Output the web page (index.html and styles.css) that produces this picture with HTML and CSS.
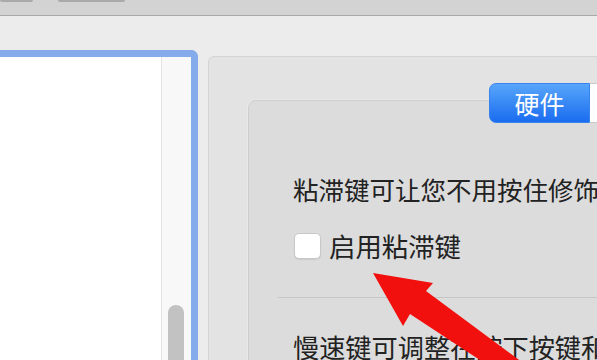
FILE: index.html
```html
<!DOCTYPE html>
<html lang="zh">
<head>
<meta charset="utf-8">
<link rel="stylesheet" href="styles.css">
</head>
<body>
<div class="titlebar">
  <span class="tabedge tab-a"></span>
  <span class="tabedge tab-b"></span>
</div>
<div class="main">
  <div class="list">
    <div class="list-body"></div>
    <div class="scrolltrack"><div class="thumb"></div></div>
  </div>
  <div class="panel">
    <div class="segmented">
      <div class="seg seg-active">硬件</div>
      <div class="seg seg-next"></div>
    </div>
    <div class="box">
      <p class="line line1">粘滞键可让您不用按住修饰键就能进行组合键操作</p>
      <label class="check-row"><span class="checkbox"></span><span class="check-label">启用粘滞键</span></label>
      <div class="sep"></div>
      <p class="line line3">慢速键可调整在按下按键和系统接受按键之间的时间</p>
    </div>
  </div>
</div>
<svg class="arrow" width="597" height="360" viewBox="0 0 597 360">
  <polygon points="373,273 433,283 426,291 530,368 492,368 410,314 403,326" fill="#f2100e"/>
</svg>
</body>
</html>
```

FILE: styles.css
```css
html, body {
  margin: 0;
  padding: 0;
}
body {
  width: 597px;
  height: 360px;
  overflow: hidden;
  position: relative;
  background: #ececec;
  font-family: "Noto Sans CJK SC", "Noto Sans", sans-serif;
  color: #222;
}
.titlebar {
  height: 15px;
  background: #d3d3d3;
  border-bottom: 1px solid #a8a8a8;
  display: flex;
  align-items: flex-start;
}
.tabedge {
  display: block;
  height: 2px;
  background: #aaaaaa;
  border-radius: 0 0 3px 3px;
}
.tab-a { width: 33px; }
.tab-b { width: 67px; margin-left: 25px; }

.main {
  display: flex;
  align-items: flex-start;
}
.list {
  flex-shrink: 0;
  width: 191px;
  height: 320px;
  margin-top: 34px;
  display: flex;
  border-top: 7px solid #86abeb;
  border-right: 7px solid #86abeb;
  border-top-right-radius: 7px;
}
.list-body {
  width: 161px;
  background: #fff;
}
.scrolltrack {
  width: 30px;
  background: #f8f8f9;
  border-left: 1px solid #e3e3e3;
  padding-left: 6px;
  box-sizing: border-box;
}
.thumb {
  width: 16px;
  height: 80px;
  margin-top: 248px;
  background: #c2c2c2;
  border-radius: 8px 8px 0 0;
}
.panel {
  flex-shrink: 0;
  width: 460px;
  height: 320px;
  margin-left: 10px;
  margin-top: 40px;
  background: #e3e3e3;
  border: 1px solid #d4d4d4;
  border-radius: 6px;
  padding: 26px 0 0 39px;
  box-sizing: border-box;
}
.segmented {
  position: relative;
  z-index: 1;
  display: flex;
  margin-left: 241px;
  height: 40px;
}
.seg {
  height: 40px;
  box-sizing: border-box;
  font-size: 25px;
  line-height: 38px;
}
.seg-active {
  width: 101px;
  text-align: center;
  color: #fff;
  background: linear-gradient(#58a5fa, #1a6cf0);
  border: 1px solid #3a83ee;
  border-radius: 7px 0 0 7px;
}
.seg-next {
  width: 60px;
  background: #fff;
  border: 1px solid #c9c9c9;
  border-left: none;
}
.box {
  margin-top: -23px;
  height: 320px;
  background: #dcdcdc;
  border: 1px solid #cecece;
  border-radius: 8px;
  box-shadow: 0 0 0 1px #e9e9e9;
  padding-top: 70px;
  box-sizing: border-box;
}
.line {
  margin: 0;
  padding-left: 44px;
  font-size: 25.5px;
  line-height: 36px;
  height: 36px;
  white-space: nowrap;
}
.check-row {
  display: flex;
  align-items: center;
  height: 36px;
  margin-top: 21px;
  padding-left: 45px;
}
.checkbox {
  width: 27px;
  height: 26px;
  box-sizing: border-box;
  background: #fff;
  border: 1px solid #c8c8c8;
  border-radius: 5px;
  box-shadow: 0 1px 1px rgba(0,0,0,0.08);
}
.check-label {
  margin-left: 8px;
  font-size: 26.4px;
  line-height: 36px;
}
.sep {
  margin-top: 33px;
  margin-left: 29px;
  height: 1px;
  background: #c6c6c6;
}
.line3 {
  margin-top: 31px;
  font-size: 26.2px;
}
.arrow {
  position: absolute;
  left: 0;
  top: 0;
  pointer-events: none;
}
```
